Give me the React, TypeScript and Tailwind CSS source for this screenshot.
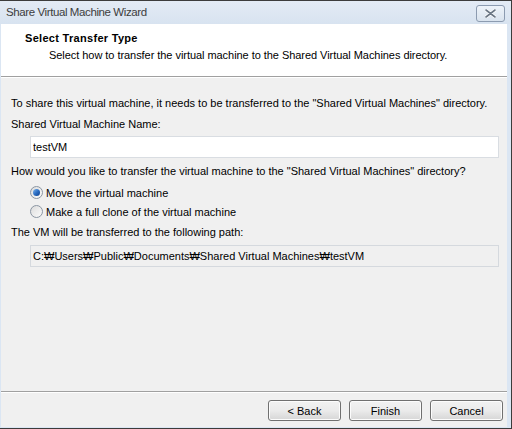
import React, { useState } from 'react';

const font = { fontFamily: '"Liberation Sans", "DejaVu Sans", sans-serif' };

const Radio = ({ checked, label, onClick }: { checked: boolean; label: string; onClick: () => void }) => (
  <div className="flex items-center h-[19px] cursor-default" onClick={onClick}>
    <div className="w-[13px] h-[13px] rounded-full border border-[#8b96a3] bg-gradient-to-br from-[#dcdcdc] to-[#fbfbfb] flex items-center justify-center">
      {checked && (
        <div className="w-[7px] h-[7px] rounded-full bg-gradient-to-br from-[#7fb5ea] via-[#2c6fc4] to-[#0d3f8c]" />
      )}
    </div>
    <span className="ml-[3px] leading-[14px]">{label}</span>
  </div>
);

const WizardButton = ({ children }: { children: React.ReactNode }) => (
  <button className="w-[73px] h-[21px] rounded-[3px] border border-[#707070] bg-gradient-to-b from-[#f2f2f2] via-[#ebebeb] to-[#d6d6d6] text-[11px] leading-[14px] text-black shadow-[inset_0_0_0_1px_#fcfcfc]">
    {children}
  </button>
);

const App = () => {
  const [mode, setMode] = useState<'move' | 'clone'>('move');
  const [vmName, setVmName] = useState('testVM');

  return (
    <div
      className="w-[512px] h-[429px] flex flex-col bg-[#dbe6f3] border-t border-r border-b border-[#3c3c3c] text-[11px] text-black overflow-hidden"
      style={font}
    >
      {/* title bar */}
      <div className="h-[23px] flex items-center justify-between pl-[6px] pr-[6px] bg-gradient-to-b from-[#e3ebf5] to-[#d8e3f0]">
        <span className="text-[11.5px] text-[#3d3d3d] tracking-[-0.4px]">Share Virtual Machine Wizard</span>
        <div className="w-[29px] h-[17px] mt-[2px] rounded-[3px] border border-[#8c9bb0] bg-gradient-to-b from-[#eef3f9] to-[#d9e3ee] flex items-center justify-center">
          <svg width="11" height="9" viewBox="0 0 11 9">
            <path d="M1 1 L10 8 M10 1 L1 8" stroke="#fff" strokeWidth="3.2" strokeLinecap="round" />
            <path d="M1 1 L10 8 M10 1 L1 8" stroke="#6b7785" strokeWidth="1.6" strokeLinecap="round" />
          </svg>
        </div>
      </div>

      <div className="flex-1 flex flex-col ml-[1px] mr-[4px] mb-[1px] bg-[#f0f0f0]">
        {/* header */}
        <div className="h-[53px] bg-white border-b border-[#a0a0a0] pt-[7px]">
          <div className="pl-[24px] font-bold leading-[14px] tracking-[0.3px]">Select Transfer Type</div>
          <div className="pl-[48px] mt-[3px] leading-[14px] tracking-[-0.05px]">
            Select how to transfer the virtual machine to the Shared Virtual Machines directory.
          </div>
        </div>
        <div className="h-px bg-white" />

        {/* body */}
        <div className="flex-1 flex flex-col pl-[10px] pr-[8px] pt-[18px]">
          <div className="leading-[14px]">
            To share this virtual machine, it needs to be transferred to the "Shared Virtual Machines" directory.
          </div>
          <div className="leading-[14px] mt-[7px]">Shared Virtual Machine Name:</div>
          <input
            value={vmName}
            onChange={(e) => setVmName(e.target.value)}
            className="ml-[19px] mt-[5px] h-[22px] px-[2px] bg-white border border-[#d9dde2] outline-none text-[11px]"
            style={font}
          />
          <div className="leading-[14px] mt-[6px]">
            How would you like to transfer the virtual machine to the "Shared Virtual Machines" directory?
          </div>
          <div className="ml-[19px] mt-[5px] flex flex-col">
            <Radio checked={mode === 'move'} label="Move the virtual machine" onClick={() => setMode('move')} />
            <Radio checked={mode === 'clone'} label="Make a full clone of the virtual machine" onClick={() => setMode('clone')} />
          </div>
          <div className="leading-[14px] mt-[4px]">The VM will be transferred to the following path:</div>
          <div className="ml-[19px] mt-[6px] h-[22px] px-[2px] flex items-center border border-[#d5d9de] bg-[#f0f0f0]">
            C:₩Users₩Public₩Documents₩Shared Virtual Machines₩{vmName}
          </div>
        </div>

        {/* footer */}
        <div className="border-t border-[#a0a0a0]" />
        <div className="h-px bg-white" />
        <div className="h-[34px] flex items-start justify-end gap-[8px] pt-[7px] pr-[4px]">
          <WizardButton>&lt; Back</WizardButton>
          <WizardButton>Finish</WizardButton>
          <WizardButton>Cancel</WizardButton>
        </div>
      </div>
    </div>
  );
};

export default App;
